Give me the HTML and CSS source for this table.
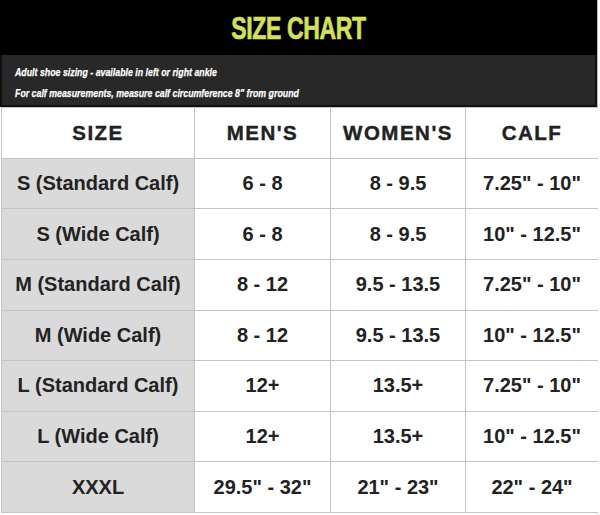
FILE: index.html
```html
<!DOCTYPE html>
<html>
<head>
<meta charset="utf-8">
<link rel="stylesheet" href="styles.css">
</head>
<body>
<div class="chart">
  <div class="title-bar"><h1 class="title">SIZE CHART</h1></div>
  <div class="notes">
    <p>Adult shoe sizing - available in left or right ankle</p>
    <p>For calf measurements, measure calf circumference 8" from ground</p>
  </div>
  <div class="table">
    <div class="cell head">SIZE</div>
    <div class="cell head">MEN'S</div>
    <div class="cell head">WOMEN'S</div>
    <div class="cell head">CALF</div>

    <div class="cell size">S (Standard Calf)</div>
    <div class="cell">6 - 8</div>
    <div class="cell">8 - 9.5</div>
    <div class="cell">7.25" - 10"</div>

    <div class="cell size">S (Wide Calf)</div>
    <div class="cell">6 - 8</div>
    <div class="cell">8 - 9.5</div>
    <div class="cell">10" - 12.5"</div>

    <div class="cell size">M (Standard Calf)</div>
    <div class="cell">8 - 12</div>
    <div class="cell">9.5 - 13.5</div>
    <div class="cell">7.25" - 10"</div>

    <div class="cell size">M (Wide Calf)</div>
    <div class="cell">8 - 12</div>
    <div class="cell">9.5 - 13.5</div>
    <div class="cell">10" - 12.5"</div>

    <div class="cell size">L (Standard Calf)</div>
    <div class="cell">12+</div>
    <div class="cell">13.5+</div>
    <div class="cell">7.25" - 10"</div>

    <div class="cell size">L (Wide Calf)</div>
    <div class="cell">12+</div>
    <div class="cell">13.5+</div>
    <div class="cell">10" - 12.5"</div>

    <div class="cell size">XXXL</div>
    <div class="cell">29.5" - 32"</div>
    <div class="cell">21" - 23"</div>
    <div class="cell">22" - 24"</div>
  </div>
</div>
</body>
</html>
```
FILE: styles.css
```css
html, body {
  margin: 0;
  padding: 0;
  background: #ffffff;
}
.chart {
  width: 597px;
  border-right: 1px solid #bdbdbd;
  font-family: "Liberation Sans", Arial, sans-serif;
}
.title-bar {
  background: #000000;
  height: 55px;
  display: flex;
  align-items: center;
  justify-content: center;
}
.title {
  margin: 0;
  font-family: "Liberation Sans", Arial, sans-serif;
  font-weight: bold;
  font-size: 32px;
  color: #d4e05b;
  letter-spacing: -0.5px;
  line-height: 1;
  transform: scaleX(0.72);
  -webkit-text-stroke: 0.7px #d4e05b;
}
.notes {
  background: #282828;
  border: 2px solid #111111;
  border-top: none;
  padding: 7px 0 0 13px;
  height: 43px;
}
.notes p {
  margin: 0;
  color: #ffffff;
  font-weight: bold;
  font-style: italic;
  font-size: 11px;
  line-height: 21px;
  transform: scaleX(0.8);
  transform-origin: left center;
  white-space: nowrap;
  -webkit-text-stroke: 0.25px #ffffff;
}
.table {
  display: grid;
  grid-template-columns: 192px 135px 134px 132px;
  grid-template-rows: repeat(8, 1fr);
  gap: 1px;
  height: 404px;
  background: #c4c4c4;
  border: 1px solid #c4c4c4;
  border-right: none;
  margin-left: 1px;
}
.cell {
  background: #ffffff;
  display: flex;
  align-items: center;
  justify-content: center;
  font-weight: bold;
  font-size: 20px;
  color: #222222;
}
.cell.size {
  background: #dadada;
}
.cell.head {
  letter-spacing: 1.5px;
  font-size: 20.5px;
  -webkit-text-stroke: 0.4px #222222;
}
```
